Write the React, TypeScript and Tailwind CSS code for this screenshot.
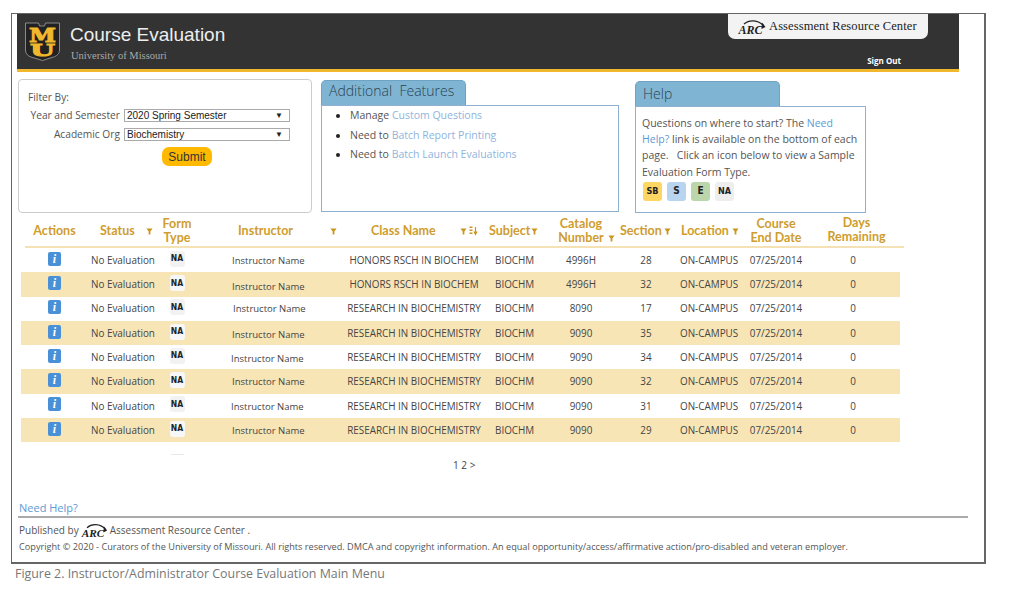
const rows = [
  { cls: "HONORS RSCH IN BIOCHEM", cat: "4996H", sec: "28", nameCls: "mt-[2px] ml-[38px]" },
  { cls: "HONORS RSCH IN BIOCHEM", cat: "4996H", sec: "32", nameCls: "mt-[5px] ml-[38px]" },
  { cls: "RESEARCH IN BIOCHEMISTRY", cat: "8090", sec: "17", nameCls: "mt-0 ml-[39px]" },
  { cls: "RESEARCH IN BIOCHEMISTRY", cat: "9090", sec: "35", nameCls: "mt-[4px] ml-[38px]" },
  { cls: "RESEARCH IN BIOCHEMISTRY", cat: "9090", sec: "34", nameCls: "mt-[3px] ml-[37px]" },
  { cls: "RESEARCH IN BIOCHEMISTRY", cat: "9090", sec: "32", nameCls: "mt-0 ml-[38px]" },
  { cls: "RESEARCH IN BIOCHEMISTRY", cat: "9090", sec: "31", nameCls: "mt-[3px] ml-[37px]" },
  { cls: "RESEARCH IN BIOCHEMISTRY", cat: "9090", sec: "29", nameCls: "mt-[2px] ml-[38px]" },
]

const gridCols = "grid grid-cols-[67px_72px_34px_146px_148px_62px_62px_68px_66px_60px_94px]"

function FilterIcon({ className = "" }: { className?: string }) {
  return (
    <svg viewBox="0 0 8 8" className={`w-[7px] h-[7px] shrink-0 ${className}`}>
      <path d="M0.5 0.5h7L5 4v3.5H3V4z" fill="#c9961f" />
    </svg>
  )
}

function SortIcon() {
  return (
    <svg viewBox="0 0 9 10" className="w-[9px] h-[10px] shrink-0 ml-[2px]">
      <rect x="0.5" y="0.5" width="3" height="1.5" fill="#c9961f" />
      <rect x="0.5" y="3.5" width="3" height="1.5" fill="#c9961f" />
      <rect x="0.5" y="6.5" width="3" height="1.5" fill="#c9961f" />
      <path d="M6.5 1v6M5 5.5 6.5 8.5 8 5.5" stroke="#c9961f" strokeWidth="1.2" fill="none" />
    </svg>
  )
}

function ArcLogo({ className = "" }: { className?: string }) {
  return (
    <svg viewBox="0 0 28 16" className={className}>
      <text x="0.5" y="14.5" fontFamily="'Liberation Serif', serif" fontSize="12" fontWeight="700" fontStyle="italic" fill="#222">
        ARC
      </text>
      <path d="M6 5C11 0.5 20 0.5 25.5 6.5" stroke="#222" strokeWidth="1.3" fill="none" />
      <path d="M24 3.5 27.5 8 23.5 10z" fill="#222" />
    </svg>
  )
}

function MuLogo() {
  return (
    <svg viewBox="0 0 35 39" className="w-[35px] h-[39px] shrink-0">
      <path d="M0.5 1h13l1 3h5l1-3h14v27c0 4-3 6-6 7l-11 3.5L6 35c-3-1-5.5-3-5.5-7z" fill="#222" stroke="#8a8a8a" strokeWidth="1" />
      <text x="17.5" y="19.5" textAnchor="middle" fontFamily="'DejaVu Serif', serif" fontSize="19" fontWeight="700" textLength="27" lengthAdjust="spacingAndGlyphs" fill="#f1b82d" stroke="#f1b82d" strokeWidth="0.9">
        M
      </text>
      <text x="17.5" y="33.5" textAnchor="middle" fontFamily="'DejaVu Serif', serif" fontSize="17" fontWeight="700" textLength="25" lengthAdjust="spacingAndGlyphs" fill="#f1b82d" stroke="#f1b82d" strokeWidth="0.9">
        U
      </text>
    </svg>
  )
}

function Badge({ label, className }: { label: string; className: string }) {
  return (
    <span className={`flex items-center justify-center rounded-[3px] font-['DejaVu_Sans_Condensed','DejaVu_Sans',sans-serif] font-bold text-[#222] ${className}`}>
      {label}
    </span>
  )
}

function Select({ value }: { value: string }) {
  return (
    <div className="flex items-center justify-between w-[166px] h-[13px] border border-[#aaa] bg-white pl-[2px] pr-[6px] font-['Liberation_Sans',sans-serif] text-[10px] text-[#222]">
      <span>{value}</span>
      <span className="text-[8px]">▼</span>
    </div>
  )
}

function HeadLabel({ children, className = "" }: { children: React.ReactNode; className?: string }) {
  return <span className={`leading-[14px] ${className}`}>{children}</span>
}

export default function App() {
  return (
    <div className="w-[1024px] h-[592px] bg-white overflow-hidden pt-[13px] pl-[11px] font-['Open_Sans',sans-serif] text-[#555]">
      <div className="w-[975px] h-[551px] border border-[#666] border-r-2 border-b-2 flex flex-col">
        {/* banner */}
        <div className="ml-[5px] w-[942px] h-[58px] shrink-0 bg-[#333] border-b-[3px] border-[#f1b82d] flex justify-between">
          <div className="flex items-start pt-[8px] pl-[8px]">
            <MuLogo />
            <div className="ml-[10px] mt-[1px]">
              <div className="font-['Liberation_Sans',sans-serif] text-[19px] leading-[24px] text-[#eee]">Course Evaluation</div>
              <div className="font-['Liberation_Serif',serif] text-[10.5px] leading-[12px] mt-[3px] ml-[1px] text-[#aaa]">University of Missouri</div>
            </div>
          </div>
          <div className="flex flex-col items-end mr-[31px]">
            <div className="flex items-center w-[200px] h-[25px] bg-[#f3f3f3] rounded-b-[7px] pl-[10px]">
              <ArcLogo className="w-[28px] h-[16px] mt-[1px]" />
              <span className="ml-[3px] -mt-[1px] font-['Liberation_Serif',serif] text-[12.5px] text-[#222] tracking-[0.1px] whitespace-nowrap">Assessment Resource Center</span>
            </div>
            <div className="mt-[16px] mr-[27px] font-['Open_Sans',sans-serif] font-bold text-[8px] leading-[12px] text-white">Sign Out</div>
          </div>
        </div>

        {/* panels */}
        <div className="flex items-start mt-[7px] pl-[6px] h-[134px] shrink-0">
          <div className="w-[294px] h-[134px] border border-[#ccc] rounded-[4px] pl-[9px] pt-[10px] text-[10.2px]">
            <div className="leading-[15px]">Filter By:</div>
            <div className="grid grid-cols-[92px_auto] justify-start gap-x-[4px] gap-y-[6px] mt-[4px] leading-[13px] items-center">
              <span className="text-right whitespace-nowrap -ml-[4px]">Year and Semester</span>
              <Select value="2020 Spring Semester" />
              <span className="text-right whitespace-nowrap">Academic Org</span>
              <Select value="Biochemistry" />
            </div>
            <div className="flex justify-start ml-[134px] mt-[6px]">
              <div className="w-[50px] h-[19px] rounded-[7px] bg-[#ffb900] flex items-center justify-center font-['Liberation_Sans',sans-serif] text-[12px] text-[#333]">Submit</div>
            </div>
          </div>

          <div className="ml-[9px] mt-[1px] w-[298px]">
            <div className="w-[145px] h-[25px] bg-[#7fb5d3] border border-[#6fa3c4] border-b-0 rounded-t-[5px] pl-[7px] text-[14px] font-light leading-[20px] text-[#2c4152] whitespace-pre">Additional  Features</div>
            <ul className="h-[107px] border border-[#8fb0d0] pl-[28px] text-[10.5px] leading-[19.5px] list-disc marker:text-[#222]">
              <li>Manage <span className="text-[#8fb4dc]">Custom Questions</span></li>
              <li>Need to <span className="text-[#8fb4dc]">Batch Report Printing</span></li>
              <li>Need to <span className="text-[#8fb4dc]">Batch Launch Evaluations</span></li>
            </ul>
          </div>

          <div className="ml-[16px] mt-[2px] w-[231px]">
            <div className="w-[145px] h-[25px] bg-[#7fb5d3] border border-[#6fa3c4] border-b-0 rounded-t-[5px] pl-[7px] text-[14px] font-light leading-[24px] text-[#2c4152]">Help</div>
            <div className="h-[107px] border border-[#8fb0d0] pl-[6px] pt-[8px] text-[10.5px] leading-[16.2px]">
              <div className="whitespace-pre">Questions on where to start? The <span className="text-[#5b9bd5]">Need</span></div>
              <div className="whitespace-pre"><span className="text-[#5b9bd5]">Help?</span> link is available on the bottom of each</div>
              <div className="whitespace-pre">page.   Click an icon below to view a Sample</div>
              <div className="whitespace-pre">Evaluation Form Type.</div>
              <div className="flex gap-[5px] mt-[2px] ml-[1px]">
                <Badge label="SB" className="w-[19px] h-[19px] text-[9px] bg-[#fdd663]" />
                <Badge label="S" className="w-[19px] h-[19px] text-[10px] bg-[#b8d4ee]" />
                <Badge label="E" className="w-[19px] h-[19px] text-[10px] bg-[#bcd6ac]" />
                <Badge label="NA" className="w-[19px] h-[19px] text-[9px] bg-[#eee]" />
              </div>
            </div>
          </div>
        </div>

        {/* table */}
        <div className="mt-[4px] ml-[9px] w-[883px] shrink-0">
          <div className={`${gridCols} h-[29px] pb-[6px] overflow-hidden font-['Lato',sans-serif] font-bold text-[12.5px] text-[#cf9d2e] items-center`}>
            <div className="text-center"><HeadLabel>Actions</HeadLabel></div>
            <div className="flex items-center pl-[12px]"><HeadLabel>Status</HeadLabel><FilterIcon className="ml-[11px]" /></div>
            <div className="flex flex-col items-center"><HeadLabel>Form</HeadLabel><HeadLabel>Type</HeadLabel></div>
            <div className="flex items-center pl-[44px]"><HeadLabel>Instructor</HeadLabel><FilterIcon className="ml-[37px]" /></div>
            <div className="flex items-center pl-[31px]"><HeadLabel>Class Name</HeadLabel><FilterIcon className="ml-[24px]" /><SortIcon /></div>
            <div className="flex items-center pl-[1px]"><HeadLabel>Subject</HeadLabel><FilterIcon className="ml-[1px]" /></div>
            <div className="flex flex-col items-center"><HeadLabel>Catalog</HeadLabel><div className="flex items-center pl-[11px]"><HeadLabel>Number</HeadLabel><FilterIcon className="ml-[4px]" /></div></div>
            <div className="flex items-center pl-[8px]"><HeadLabel>Section</HeadLabel><FilterIcon className="ml-[2px]" /></div>
            <div className="flex items-center pl-[1px]"><HeadLabel>Location</HeadLabel><FilterIcon className="ml-[3px]" /></div>
            <div className="flex flex-col items-center"><HeadLabel>Course</HeadLabel><HeadLabel>End Date</HeadLabel></div>
            <div className="flex flex-col items-center -mt-[2px] pl-[7px]"><HeadLabel>Days</HeadLabel><HeadLabel>Remaining</HeadLabel></div>
          </div>
          <div className="ml-[4px] w-[879px] h-[2px] bg-[#f5e2b4]" />
          {rows.map((r, i) => (
            <div key={i} className={`${gridCols} h-[24.3px] w-[879px] items-center text-[9.9px] text-[#444] ${i % 2 === 1 ? "bg-[#f8e5b6]" : ""}`}>
              <div className="flex justify-center -mt-[3px]">
                <span className="flex items-center justify-center w-[13px] h-[14px] rounded-[2px] bg-[#4a90d6] font-['Liberation_Serif',serif] italic font-bold text-[12px] text-white">i</span>
              </div>
              <div className="pl-[3px] whitespace-nowrap">No Evaluation</div>
              <div className="flex justify-center -mt-[3px]">
                <Badge label="NA" className={`w-[15px] h-[16px] text-[8.5px] ${i % 2 === 1 ? "bg-[#f7f7f7]" : "bg-[#f2f2f2]"}`} />
              </div>
              <div className={`text-[9.5px] whitespace-nowrap ${r.nameCls}`}>Instructor Name</div>
              <div className="text-center whitespace-nowrap">{r.cls}</div>
              <div className="pl-[7px]">BIOCHM</div>
              <div className="text-center">{r.cat}</div>
              <div className="text-center">{r.sec}</div>
              <div className="whitespace-nowrap">ON-CAMPUS</div>
              <div className="text-center">07/25/2014</div>
              <div className="text-center">0</div>
            </div>
          ))}
          <div className="ml-[150px] mt-[12px] w-[13px] h-px bg-[#e8e8e8]" />
          <div className="ml-[432px] mt-[3px] text-[10px] leading-[14px] text-[#444] whitespace-pre">1 2 &gt;</div>
        </div>

        {/* footer */}
        <div className="mt-[28px] ml-[7px] text-[#5b9bd5] text-[11px] leading-[16px]">Need Help?</div>
        <div className="ml-[6px] w-[950px] h-[2px] bg-[#aaa]" />
        <div className="flex items-center ml-[7px] mt-[4px] h-[16px] text-[10px] text-[#555]">
          <span>Published by</span>
          <ArcLogo className="w-[27px] h-[15px] mx-[2px]" />
          <span>Assessment Resource Center .</span>
        </div>
        <div className="ml-[7px] mt-[2px] text-[9.17px] leading-[14px] text-[#555] whitespace-nowrap">
          Copyright © 2020 - Curators of the University of Missouri. All rights reserved. DMCA and copyright information. An equal opportunity/access/affirmative action/pro-disabled and veteran employer.
        </div>
      </div>
      <div className="ml-[4px] mt-[1px] text-[12.4px] leading-[18px] text-[#777]">Figure 2. Instructor/Administrator Course Evaluation Main Menu</div>
    </div>
  )
}
